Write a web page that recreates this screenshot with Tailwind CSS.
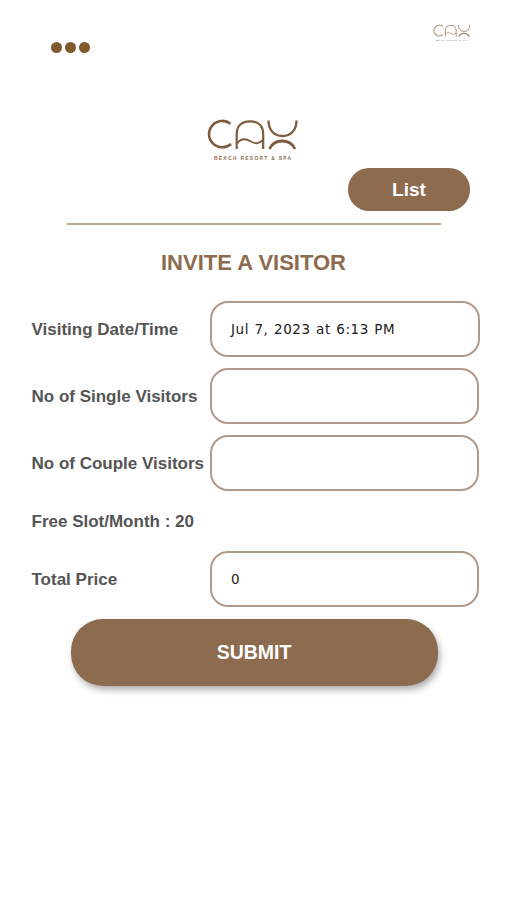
<!DOCTYPE html>
<html lang="en">
<head>
  <meta charset="UTF-8" />
  <meta name="viewport" content="width=device-width, initial-scale=1.0" />
  <title>Invite a Visitor</title>
  <script src="https://cdn.jsdelivr.net/npm/@tailwindcss/browser@4"></script>
</head>
<body class="bg-[#fefefe] font-['Liberation_Sans',Arial,sans-serif]">
  <!-- Logo, used in the top bar and above the form -->
  <svg class="hidden">
    <symbol id="logo" viewBox="0 0 92 44">
      <g fill="none" stroke="#7d5b3d">
        <path d="M23.5 5.8A13.2 13.2 0 1 0 24 26" stroke-width="2.6" />
        <path d="M29.7 31V16C29.7 7.5 35 3.3 43 3.3S56.2 7.5 56.2 16V31" stroke-width="2.2" />
        <path d="M30 25.5C34 19.5 39 20.5 44 23.5S52 25.500 56 22" stroke-width="1.8" />
        <path d="M61.5 2.5C61.5 12.5 67.5 18 75.5 18S89.500 12.5 89.500 2.5" stroke-width="2.3" />
        <path d="M62.5 31C65 25.5 69 23 75 23S85.5 25.5 88 31" stroke-width="2.8" />
      </g>
      <text x="7" y="42" textLength="77" font-size="4.8" font-weight="700" fill="#8c6b4f">BEACH RESORT &amp; SPA</text>
    </symbol>
  </svg>

  <main class="w-[507px] h-[900px] overflow-hidden">
    <header class="h-[118px] flex items-start justify-between pl-[51px] pr-[36px] pt-[24px]">
      <button class="flex gap-[3px] mt-[18px]" aria-label="Menu">
        <span class="size-[11px] rounded-full bg-[#805a2d]"></span>
        <span class="size-[11px] rounded-full bg-[#805a2d]"></span>
        <span class="size-[11px] rounded-full bg-[#805a2d]"></span>
      </button>
      <svg class="w-[38px] h-[18px] opacity-75"><use href="#logo" /></svg>
    </header>

    <div class="h-[50px] pl-[207px]">
      <svg class="w-[92px] h-[44px]"><use href="#logo" /></svg>
    </div>

    <div class="flex justify-end pr-[37px]">
      <button class="w-[122px] h-[43px] rounded-[21px] bg-[#8c6b4f] text-white text-[19px] font-bold pt-px">List</button>
    </div>

    <div class="mt-[12px] ml-[67px] w-[374px] h-[2px] bg-[#bda797]"></div>

    <h1 class="mt-[24px] h-[28px] leading-[28px] text-center text-[22px] font-bold text-[#8c6b4f]">INVITE A VISITOR</h1>

    <form class="mt-[24px] pl-[31.5px] text-[17px] font-bold text-[#555]">
      <div class="flex items-center h-[56px]">
        <label class="w-[178.5px] pt-px shrink-0 whitespace-nowrap">Visiting Date/Time</label>
        <div class="w-[270px] h-[56px] flex items-center px-[19px] border-2 border-[#b09a8b] rounded-[18px] font-['DejaVu_Sans',sans-serif] font-normal text-[13.5px] tracking-[0.55px] [word-spacing:0.7px] text-[#222] whitespace-nowrap">Jul 7, 2023 at 6:13 PM</div>
      </div>
      <div class="flex items-center h-[56px] mt-[11px]">
        <label class="w-[178.5px] pt-px shrink-0 whitespace-nowrap">No of Single Visitors</label>
        <div class="w-[269px] h-[56px] border-2 border-[#b09a8b] rounded-[18px]"></div>
      </div>
      <div class="flex items-center h-[56px] mt-[11px]">
        <label class="w-[178.5px] pt-px shrink-0 whitespace-nowrap">No of Couple Visitors</label>
        <div class="w-[269px] h-[56px] border-2 border-[#b09a8b] rounded-[18px]"></div>
      </div>
      <div class="flex items-center h-[60px] pt-[2px]">Free Slot/Month : 20</div>
      <div class="flex items-center h-[56px]">
        <label class="w-[178.5px] pt-px shrink-0 whitespace-nowrap">Total Price</label>
        <div class="w-[269px] h-[56px] flex items-center px-[19px] border-2 border-[#b09a8b] rounded-[18px] font-['DejaVu_Sans',sans-serif] font-normal text-[13.5px] text-[#222]">0</div>
      </div>
      <button type="button" class="block mt-[12px] ml-[39px] w-[367px] h-[67px] rounded-[32px] bg-[#8c6b4f] text-white text-[19.5px] font-bold shadow-[2px_4px_6px_rgba(0,0,0,0.3)]">SUBMIT</button>
    </form>
  </main>
</body>
</html>
